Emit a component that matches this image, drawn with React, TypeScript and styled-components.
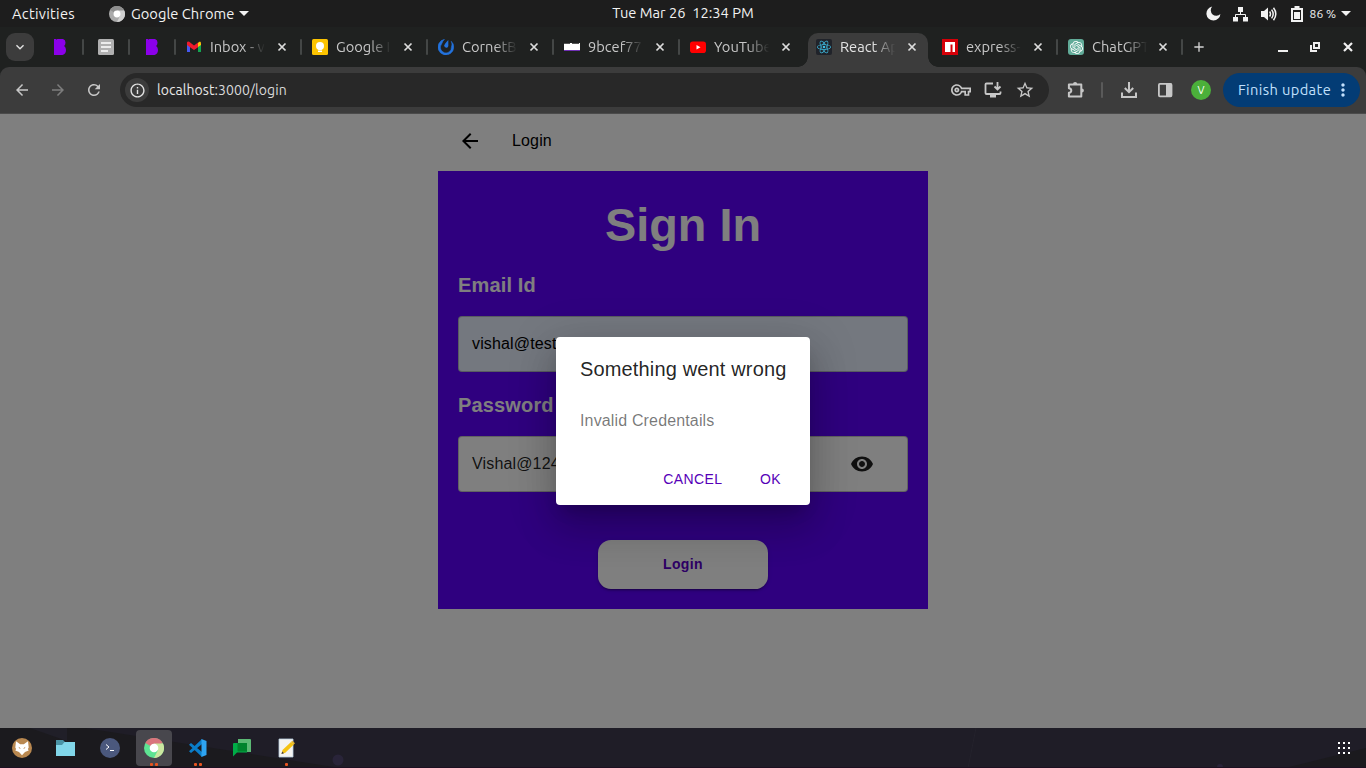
import React from 'react';
import styled, { createGlobalStyle, css } from 'styled-components';
import {
  MdArrowBack, MdArrowForward, MdRefresh, MdOutlineInfo, MdStarBorder, MdOutlineVpnKey,
  MdMoreVert, MdVisibility, MdAdd, MdKeyboardArrowDown,
} from 'react-icons/md';
import { SiOpenai, SiReact } from 'react-icons/si';

const GlobalStyle = createGlobalStyle`
  *, *::before, *::after { box-sizing: border-box; }
  html, body { margin: 0; padding: 0; background: #1d1d1d; }
  body { overflow: hidden; }
  button { font: inherit; border: 0; background: none; padding: 0; margin: 0; }
  svg { display: block; flex: none; }
`;

const shellFont = "'Ubuntu', 'Noto Sans', 'Open Sans', sans-serif";

const Desktop = styled.div`
  width: 1366px;
  height: 768px;
  display: flex;
  flex-direction: column;
  overflow: hidden;
  font-family: ${shellFont};
`;

/* ---------- GNOME top bar ---------- */
const TopBar = styled.header`
  height: 27px;
  flex: none;
  display: grid;
  grid-template-columns: 1fr auto 1fr;
  align-items: center;
  background: #1d1d1d;
  color: #f2f2f2;
  padding: 0 15px 0 12px;
`;
const BarLeft = styled.div`
  display: flex;
  align-items: center;
`;
const BarRight = styled.div`
  display: flex;
  align-items: center;
  justify-content: flex-end;
`;
const BarText = styled.span<{ $spacing?: number; $size?: number }>`
  font-size: ${(p) => p.$size ?? 14.67}px;
  line-height: 20px;
  letter-spacing: ${(p) => p.$spacing ?? 0}px;
  white-space: pre;
`;
const Clock = styled(BarText)`
  padding-left: 3px;
  padding-bottom: 1px;
`;
const AppMenu = styled.div`
  display: flex;
  align-items: center;
  margin-left: 34px;
  gap: 6px;
`;
const StatusIcons = styled.div`
  display: flex;
  align-items: center;
  gap: 12px;
  margin-right: 7px;
  & > :last-child { margin-left: 2px; }
`;
const Caret = styled.i<{ $offset?: number }>`
  border: 5px solid transparent;
  border-top-color: #f2f2f2;
  border-bottom: 0;
  margin-left: ${(p) => p.$offset ?? 0}px;
`;

/* ---------- Tab strip ---------- */
const TabStrip = styled.nav`
  height: 40px;
  flex: none;
  display: flex;
  align-items: center;
  background: #1f2120;
  color: #c7c7c7;
  padding-left: 6px;
`;
const TabSearch = styled.button`
  width: 28px;
  height: 28px;
  margin-right: 2px;
  border-radius: 9px;
  background: #3c3c3c;
  color: #e3e3e3;
  display: grid;
  place-items: center;
`;
const Separator = styled.i<{ $hidden?: boolean }>`
  width: 2px;
  height: 16px;
  flex: none;
  border-radius: 1px;
  background: ${(p) => (p.$hidden ? 'transparent' : '#444746')};
`;
const PinnedTab = styled.div`
  width: 46px;
  display: flex;
  align-items: center;
  gap: 14px;
`;
const Tab = styled.div<{ $active?: boolean; $width: number }>`
  position: relative;
  width: ${(p) => p.$width}px;
  height: 40px;
  flex: none;
  display: flex;
  align-items: center;
  isolation: isolate;
  padding-right: 12px;
  ${(p) =>
    p.$active &&
    css`
      color: #e3e3e3;
      &::before {
        content: '';
        position: absolute;
        z-index: -1;
        inset: 6px 2px 0 4px;
        border-radius: 10px 10px 0 0;
        background: #3c3c3c;
      }
      &::after {
        content: '';
        position: absolute;
        z-index: -1;
        inset: auto -8px 0 -6px;
        height: 10px;
        background:
          radial-gradient(circle at 0 0, transparent 9.5px, #3c3c3c 10px) left / 10px 10px no-repeat,
          radial-gradient(circle at 100% 0, transparent 9.5px, #3c3c3c 10px) right / 10px 10px no-repeat;
      }
    `}
`;
const Favicon = styled.span`
  width: 16px;
  height: 16px;
  flex: none;
  margin: 0 8px 0 10px;
  display: grid;
  place-items: center;
`;
const TabTitle = styled.span`
  width: 60px;
  white-space: pre;
  font-size: 14.67px;
  line-height: 22px;
  mask-image: linear-gradient(90deg, #000 55%, transparent 92%);
`;
const TabClose = styled.button`
  width: 12px;
  height: 12px;
  margin-left: auto;
`;
const NewTab = styled.button`
  width: 16px;
  height: 16px;
  margin-left: 8px;
  color: #d4d4d4;
`;
const WindowButtons = styled.div`
  display: flex;
  align-items: center;
  gap: 20px;
  margin-left: auto;
  padding-right: 12px;
`;

/* ---------- Toolbar ---------- */
const ToolbarBack = styled.div`
  flex: none;
  background: #1f2120;
`;
const Toolbar = styled.div`
  height: 47px;
  display: flex;
  align-items: center;
  background: #3c3c3c;
  border-bottom: 1px solid #4b4b4b;
  border-radius: 9px 9px 0 0;
  padding: 0 6px 0 13px;
  color: #c7c7c7;
`;
const NavButtons = styled.div`
  display: flex;
  gap: 18px;
  margin-right: 17px;
`;
const Omnibox = styled.div`
  width: 929px;
  height: 34px;
  flex: none;
  display: flex;
  align-items: center;
  padding: 0 14px 0 5px;
  border-radius: 17px;
  background: #282828;
`;
const SiteInfo = styled.span`
  width: 24px;
  height: 24px;
  display: grid;
  place-items: center;
  border-radius: 50%;
  background: #3c3c3c;
  color: #e3e3e3;
  margin-right: 8px;
`;
const Url = styled.span`
  flex: 1;
  font-size: 14px;
  line-height: 22px;
  letter-spacing: 0.06px;
  color: #dadada;
  b { font-weight: 400; color: #e8e8e8; }
`;
const OmniActions = styled.div`
  display: flex;
  align-items: center;
  gap: 13px;
`;
const ToolActions = styled.div`
  display: flex;
  align-items: center;
  margin-left: 17px;
`;
const ToolDivider = styled(Separator)`
  background: #5a5a5a;
  margin: 0 17px 0 15px;
`;
const DownloadGroup = styled.div`
  display: flex;
  align-items: center;
  gap: 19px;
`;
const Avatar = styled.span`
  width: 20px;
  height: 20px;
  flex: none;
  margin: 0 12px 0 18px;
  border-radius: 50%;
  background: #4bb03a;
  color: #fff;
  font-size: 11px;
  line-height: 20px;
  text-align: center;
`;
const UpdateButton = styled.button`
  width: 137px;
  height: 34px;
  flex: none;
  display: flex;
  align-items: center;
  justify-content: space-between;
  padding: 0 7px 0 15px;
  border-radius: 17px;
  background: #033c75;
  color: #c2e0fd;
  font-family: ${shellFont};
  font-size: 14.67px;
  letter-spacing: 0.38px;
  white-space: nowrap;
`;
const UpdateLabel = styled.span`
  padding-bottom: 2px;
`;

/* ---------- Web page ---------- */
const Page = styled.main`
  position: relative;
  flex: 1;
  background: #fff;
  font-family: 'Liberation Sans', Arial, sans-serif;
`;
const Column = styled.section`
  width: 490px;
  margin: 0 auto;
`;
const PageHeader = styled.div`
  height: 57px;
  display: flex;
  align-items: center;
  padding: 0 20px 3px;
  gap: 30px;
  font-size: 16px;
  letter-spacing: 0.00938em;
  color: #000;
`;
const Card = styled.div`
  height: 438px;
  display: flex;
  flex-direction: column;
  align-items: stretch;
  padding: 26px 20px 20px;
  background: #5e00ff;
`;
const Heading = styled.h1`
  margin: 0 0 16px;
  font-size: 46.8px;
  line-height: 56px;
  text-align: center;
  color: #fff;
`;
const Label = styled.label`
  font-size: 20px;
  font-weight: 700;
  line-height: 32px;
  letter-spacing: 0.0075em;
  color: #fff;
  margin-bottom: 15px;
`;
const Field = styled.div<{ $filled?: boolean }>`
  height: 56px;
  display: flex;
  align-items: center;
  justify-content: space-between;
  margin-bottom: 17px;
  padding: 0 33px 1px 13px;
  border: 1px solid rgba(0, 0, 0, 0.23);
  border-radius: 4px;
  background: ${(p) => (p.$filled ? '#e8f0fe' : '#fff')};
  font-size: 16px;
  letter-spacing: 0.00938em;
  color: ${(p) => (p.$filled ? '#000' : 'rgba(0, 0, 0, 0.87)')};
`;
const LoginButton = styled.button`
  align-self: center;
  width: 170px;
  height: 49px;
  margin-top: auto;
  padding-bottom: 2px;
  border-radius: 13px;
  background: #fff;
  color: #5b00c9;
  font-size: 14px;
  font-weight: 700;
  letter-spacing: 0.02857em;
  box-shadow: 0 3px 1px -2px rgba(0, 0, 0, 0.2), 0 2px 2px 0 rgba(0, 0, 0, 0.14), 0 1px 5px 0 rgba(0, 0, 0, 0.12);
`;
const Backdrop = styled.div`
  position: absolute;
  inset: 0;
  display: grid;
  place-items: center;
  background: rgba(0, 0, 0, 0.5);
`;
const Dialog = styled.div`
  width: 254px;
  border-radius: 4px;
  background: #fff;
  box-shadow: 0 11px 15px -7px rgba(0, 0, 0, 0.2), 0 24px 38px 3px rgba(0, 0, 0, 0.14), 0 9px 46px 8px rgba(0, 0, 0, 0.12);
`;
const DialogTitle = styled.h2`
  margin: 0;
  padding: 16px 24px;
  font-size: 20px;
  font-weight: 400;
  line-height: 32px;
  letter-spacing: 0.0075em;
  white-space: nowrap;
  color: rgba(0, 0, 0, 0.87);
`;
const DialogText = styled.p`
  margin: 0;
  padding: 8px 24px 20px;
  font-size: 16px;
  line-height: 24px;
  letter-spacing: 0.00938em;
  color: rgba(0, 0, 0, 0.54);
`;
const DialogActions = styled.div`
  display: flex;
  justify-content: flex-end;
  gap: 8px;
  padding: 8px;
`;
const DialogButton = styled.button`
  min-width: 64px;
  height: 36px;
  padding: 0 7.5px 0 8.5px;
  color: #5600b8;
  font-size: 14px;
  letter-spacing: 0.02857em;
`;

/* ---------- Taskbar ---------- */
const Taskbar = styled.footer`
  position: relative;
  isolation: isolate;
  height: 40px;
  flex: none;
  display: flex;
  align-items: center;
  justify-content: space-between;
  padding: 0 15px 0 4px;
  background: #1f1d27;
  overflow: hidden;
`;
const Wallpaper = styled.svg`
  position: absolute;
  inset: 0;
  z-index: -1;
`;
const Apps = styled.div`
  display: flex;
  gap: 8px;
`;
const AppItem = styled.div<{ $active?: boolean }>`
  position: relative;
  width: 36px;
  height: 36px;
  display: grid;
  place-items: center;
  border-radius: 4px;
  background: ${(p) => (p.$active ? '#48474d' : 'transparent')};
`;
const RunningDots = styled.span`
  position: absolute;
  left: 0;
  right: 0;
  bottom: 0;
  display: flex;
  justify-content: center;
  gap: 2px;
  i { width: 3px; height: 3px; border-radius: 1px; background: #e95420; }
`;

/* ---------- Drawings ---------- */
const ChromeMark = ({ size, colors }: { size: number; colors: string[] }) => (
  <svg width={size} height={size} viewBox="0 0 20 20">
    <circle cx="10" cy="10" r="10" fill={colors[2]} />
    <path d="M10 10 1.3 5A10 10 0 0 1 18.7 5Z" fill={colors[0]} />
    <path d="M10 5.5H19A10 10 0 0 1 10 20L14 12Z" fill={colors[1]} />
    <circle cx="10" cy="10" r="4.3" fill="#fff" />
  </svg>
);

const MoonIcon = () => (
  <svg width="15" height="15" viewBox="0 0 15 15">
    <path d="M6.2.6A7 7 0 1 0 14.4 8 5.2 5.2 0 0 1 6.2.6Z" fill="#f2f2f2" />
  </svg>
);
const NetworkIcon = () => (
  <svg width="16" height="16" viewBox="0 0 16 16" fill="#f2f2f2">
    <path d="M5 1h5v5H5zM0 11h5v4.500H0zM10 11h5v4.500h-5z" />
    <path d="M7.500 5v3.500M2.500 12V8.500h10V12" fill="none" stroke="#f2f2f2" />
  </svg>
);
const VolumeIcon = () => (
  <svg width="16" height="16" viewBox="0 0 16 16">
    <path d="M0 5h3l4-3.5v13L3 11H0z" fill="#f2f2f2" />
    <path d="M8.6 5.5q1.8 2.5 0 5M10.6 3.6q3.2 4.4 0 8.8M12.5 1.8q4.6 6.2 0 12.4" fill="none" stroke="#f2f2f2" strokeWidth="1.5" />
  </svg>
);
const BatteryIcon = () => (
  <svg width="12" height="16" viewBox="0 0 12 16">
    <path d="M1 3h10v12H1z" fill="none" stroke="#f2f2f2" strokeWidth="2" />
    <path d="M3.5 0h5v3h-5zM3 6h6v7H3z" fill="#f2f2f2" />
  </svg>
);

const BIcon = () => (
  <svg width="16" height="16" viewBox="0 0 16 16">
    <path d="M2 0h2l.6.7L5.300 0H11q2.500.8 2.500 3.600 0 2.200-1.300 3.400Q14 8.500 14 11q0 3.800-3.500 5H2z" fill="#8b00ea" />
  </svg>
);
const DocIcon = () => (
  <svg width="16" height="16" viewBox="0 0 16 16">
    <rect width="16" height="16" rx="1.5" fill="#b0b0b0" />
    <path d="M3 4h10M3 8h10M3 12h7" stroke="#fff" strokeWidth="1.7" />
  </svg>
);
const GmailIcon = () => (
  <svg width="16" height="16" viewBox="0 0 16 16">
    <path d="M1 5v8h3V7z" fill="#4659f0" />
    <path d="M12 7v6h3V5z" fill="#13a551" />
    <path d="M12 3.800 14 2.500q1 .5 1 2V6l-3 2z" fill="#ffc107" />
    <path d="M1 3.500Q1.500 2 3.200 2.800L8 6.500l4-3v4.700L8 11 4 8.200 1 6z" fill="#f01a2c" />
  </svg>
);
const KeepIcon = () => (
  <svg width="16" height="16" viewBox="0 0 16 16">
    <rect width="16" height="16" rx="1.5" fill="#fdc400" />
    <circle cx="8" cy="7" r="4" fill="#fff" />
    <path d="M6 8h4v2.500H6zM6 11.500h4V13H6z" fill="#fff" />
  </svg>
);
const CornetIcon = () => (
  <svg width="16" height="16" viewBox="0 0 16 16">
    <path d="M6.500 .300A7.900 7.900 0 1 0 13.200 2.200 7 7 0 0 1 13.400 8 5.500 5.500 0 1 1 3.600 5Q4.600 2 6.500 .300Z" fill="#2372dc" stroke="#2372dc" strokeWidth=".5" />
    <path d="M10.300 1v6q-.3 2-2 1.800Q6 8.300 6.300 6.200 6.700 5 10.300 1Z" fill="#2372dc" />
  </svg>
);
const StripIcon = () => (
  <svg width="16" height="16" viewBox="0 0 16 16">
    <path d="M0 4h16v8H0z" fill="#fff" />
    <path d="M0 4.500h6M8 4.500h7" stroke="#555" />
    <path d="M0 11.500h16" stroke="#6f30b5" />
  </svg>
);
const YoutubeIcon = () => (
  <svg width="16" height="16" viewBox="0 0 16 16">
    <rect y="2.5" width="16" height="11.5" rx="2.8" fill="#f00" />
    <path d="M6.500 6 10.500 8.200 6.500 10.400z" fill="#fff" />
  </svg>
);
const ReactTile = styled.span`
  width: 16px;
  height: 16px;
  display: grid;
  place-items: center;
  border-radius: 2px;
  background: #20232a;
  color: #3fc1e6;
`;
const OpenAiTile = styled(ReactTile)`
  border-radius: 3px;
  background: #61ab98;
  color: #fff;
`;
const NpmIcon = () => (
  <svg width="16" height="16" viewBox="0 0 16 16">
    <path d="M0 0h16v16H0z" fill="#d50008" />
    <path d="M3 3h10v10h-2.500V5.500h-2V13H3z" fill="#fff" />
  </svg>
);
const TabCloseIcon = () => (
  <svg width="12" height="12" viewBox="0 0 12 12">
    <path d="m2.500 2.500 7 7M9.500 2.500l-7 7" stroke="#dcdcdc" strokeWidth="1.7" />
  </svg>
);

const InstallIcon = () => (
  <svg width="18" height="18" viewBox="0 0 18 18" fill="none" stroke="#c7c7c7" strokeWidth="1.8">
    <path d="M9 2.500H2.500q-1 0-1 1v8.500q0 1 1 1h13q1 0 1-1v-1.500" />
    <path d="M6 15h6" strokeWidth="3" />
    <path d="M13.500 1v7M10.500 5.500l3 3 3-3" />
  </svg>
);
const ExtensionIcon = () => (
  <svg width="20" height="20" viewBox="0 0 20 20">
    <path
      d="M2.900 4.400h12.400v12.200H2.900v-3.800q2.400-.3 2.400-2.300T2.900 8.200z"
      fill="none" stroke="#c7c7c7" strokeWidth="2" strokeLinejoin="round"
    />
    <path d="M7 4a2.100 2.100 0 0 1 4.200 0zM15.800 8.400a2.100 2.100 0 0 1 0 4.200z" fill="#c7c7c7" />
  </svg>
);
const DownloadIcon = () => (
  <svg width="18" height="18" viewBox="0 0 18 18" fill="none" stroke="#c7c7c7" strokeWidth="2">
    <path d="M9 1v10M4.800 7 9 11.200 13.200 7M2 11.500V16h14v-4.500" />
  </svg>
);
const SidePanelIcon = () => (
  <svg width="16" height="16" viewBox="0 0 16 16">
    <rect x="1.9" y="1.9" width="12.6" height="12.4" rx="1" fill="none" stroke="#c7c7c7" strokeWidth="1.8" />
    <path d="M9 1.500h5.500v13H9z" fill="#c7c7c7" />
  </svg>
);
const MinimizeIcon = () => (
  <svg width="12" height="12" viewBox="0 0 12 12"><path d="M0 10h10" stroke="#f0f0f0" strokeWidth="2" /></svg>
);
const RestoreIcon = () => (
  <svg width="12" height="12" viewBox="0 0 12 12" fill="none" stroke="#f0f0f0">
    <path d="M4 2h5v5H4z" strokeWidth="2" />
    <path d="M1 4v6h6" strokeWidth="2" />
  </svg>
);
const CloseIcon = () => (
  <svg width="12" height="12" viewBox="0 0 12 12"><path d="m2 2 8 8M10 2l-8 8" stroke="#f0f0f0" strokeWidth="2.2" /></svg>
);

const FoxIcon = () => (
  <svg width="20" height="20" viewBox="0 0 20 20">
    <circle cx="10" cy="10" r="10" fill="#b98850" />
    <path d="M4 3.200 8.200 6.300h3.600L16 3.200l.7 6.300-.8 1.500.8 1.500-3.700 1.500-3 3.300-3-3.300-3.700-1.500.8-1.500-.8-1.500z" fill="#fff" />
    <path d="m6.800 9.500 1.500.9M13.200 9.500l-1.500.9" stroke="#b98850" />
  </svg>
);
const FolderIcon = () => (
  <svg width="20" height="20" viewBox="0 0 20 20">
    <path d="M0 2h7l2 2v4H0z" fill="#4a93a5" />
    <path d="M0 7h6l2.500-3H19v14H0z" fill="#81d6e9" />
  </svg>
);
const TerminalIcon = () => (
  <svg width="20" height="20" viewBox="0 0 20 20">
    <circle cx="10" cy="10" r="10" fill="#4b587d" />
    <path d="m6 6.500 3 2.500-3 2.500M10 12.500h4" fill="none" stroke="#fff" />
  </svg>
);
const CodeIcon = () => (
  <svg width="20" height="20" viewBox="0 0 20 20">
    <path d="M14 1v5L3 15 1 13.300zM1 6.700 3 5l11 9v5z" fill="#0a7dc9" />
    <path d="m13.500 1 5 2v14l-5 2z" fill="#2ea4f2" />
  </svg>
);
const ChatIcon = () => (
  <svg width="20" height="20" viewBox="0 0 20 20">
    <path d="M6 1h12q1 0 1 1v12h-3H6z" fill="#5bb974" />
    <path d="M2 5h13v9.500H5L1 18.500V6q0-1 1-1z" fill="#00ac47" />
    <path d="M5.500 5H15v8.500H6.500q-1 0-1-1z" fill="#00832d" />
  </svg>
);
const NotesIcon = () => (
  <svg width="20" height="20" viewBox="0 0 20 20">
    <path d="M3 1h14v18H3z" fill="#f4f3f1" stroke="#b9cde0" strokeWidth=".8" />
    <path d="m5.500 16 1-4L15 4l2.800 2.500-8.500 8.200z" fill="#f5c211" />
    <path d="m5.500 16 .7-2.500 1.800 1.700z" fill="#3d3846" />
    <path d="m15 4 1.300-1.300 2.700 2.500-1.300 1.400z" fill="#e5b52c" />
  </svg>
);
const GridIcon = () => (
  <svg width="14" height="14" viewBox="0 0 14 14" fill="#fff">
    {[1, 6, 11].map((y) => [1, 6, 11].map((x) => <rect key={`${x}${y}`} x={x} y={y} width="2" height="2" />))}
  </svg>
);

const tabs = [
  { title: 'Inbox - v', icon: <GmailIcon /> },
  { title: 'Google I', icon: <KeepIcon /> },
  { title: 'CornetB', icon: <CornetIcon /> },
  { title: '9bcef77', icon: <StripIcon /> },
  { title: 'YouTube', icon: <YoutubeIcon /> },
  { title: 'React Ap', icon: <ReactTile><SiReact size={14} /></ReactTile>, active: true },
  { title: 'express-', icon: <NpmIcon /> },
  { title: 'ChatGPT', icon: <OpenAiTile><SiOpenai size={13} /></OpenAiTile>, width: 125 },
];

const dockApps = [
  { icon: <FoxIcon />, windows: 0 },
  { icon: <FolderIcon />, windows: 0 },
  { icon: <TerminalIcon />, windows: 0 },
  { icon: <ChromeMark size={20} colors={['#d9747c', '#cbe8a0', '#5ee493']} />, windows: 2, active: true },
  { icon: <CodeIcon />, windows: 2 },
  { icon: <ChatIcon />, windows: 0 },
  { icon: <NotesIcon />, windows: 1 },
];

export default function App() {
  return (
    <Desktop>
      <GlobalStyle />
      <TopBar>
        <BarLeft>
          <BarText $spacing={0.28}>Activities</BarText>
          <AppMenu>
            <ChromeMark size={16} colors={['#8f8f8f', '#d0d0d0', '#aaaaaa']} />
            <BarText $spacing={0.05}>Google Chrome</BarText>
            <Caret $offset={-1} />
          </AppMenu>
        </BarLeft>
        <Clock>Tue Mar 26  12:34 PM</Clock>
        <BarRight>
          <StatusIcons>
            <MoonIcon />
            <NetworkIcon />
            <VolumeIcon />
            <BatteryIcon />
          </StatusIcons>
          <BarText $size={12}>86 %</BarText>
          <Caret $offset={5} />
        </BarRight>
      </TopBar>

      <TabStrip>
        <TabSearch><MdKeyboardArrowDown size={16} /></TabSearch>
        <PinnedTab><Separator $hidden /><BIcon /></PinnedTab>
        <PinnedTab><Separator /><DocIcon /></PinnedTab>
        <PinnedTab><Separator /><BIcon /></PinnedTab>
        {tabs.map((tab, i) => (
          <Tab key={tab.title} $active={tab.active} $width={tab.width ?? 126}>
            <Separator $hidden={i === 5 || i === 6} />
            <Favicon>{tab.icon}</Favicon>
            <TabTitle>{tab.title}</TabTitle>
            <TabClose><TabCloseIcon /></TabClose>
          </Tab>
        ))}
        <Separator />
        <NewTab><MdAdd size={16} /></NewTab>
        <WindowButtons>
          <MinimizeIcon />
          <RestoreIcon />
          <CloseIcon />
        </WindowButtons>
      </TabStrip>

      <ToolbarBack>
        <Toolbar>
          <NavButtons>
            <MdArrowBack size={18} />
            <MdArrowForward size={18} color="#7d7d7d" />
            <MdRefresh size={18} />
          </NavButtons>
          <Omnibox>
            <SiteInfo><MdOutlineInfo size={17} /></SiteInfo>
            <Url><b>localhost</b>:3000/login</Url>
            <OmniActions>
              <MdOutlineVpnKey size={20} />
              <InstallIcon />
              <MdStarBorder size={20} />
            </OmniActions>
          </Omnibox>
          <ToolActions>
            <ExtensionIcon />
            <ToolDivider />
            <DownloadGroup>
              <DownloadIcon />
              <SidePanelIcon />
            </DownloadGroup>
            <Avatar>V</Avatar>
          </ToolActions>
          <UpdateButton><UpdateLabel>Finish update</UpdateLabel><MdMoreVert size={20} /></UpdateButton>
        </Toolbar>
      </ToolbarBack>

      <Page>
        <Column>
          <PageHeader><MdArrowBack size={24} />Login</PageHeader>
          <Card>
            <Heading>Sign In</Heading>
            <Label>Email Id</Label>
            <Field $filled>vishal@test.com</Field>
            <Label>Password</Label>
            <Field>Vishal@124<MdVisibility size={24} /></Field>
            <LoginButton>Login</LoginButton>
          </Card>
        </Column>
        <Backdrop>
          <Dialog role="dialog">
            <DialogTitle>Something went wrong</DialogTitle>
            <DialogText>Invalid Credentails</DialogText>
            <DialogActions>
              <DialogButton>CANCEL</DialogButton>
              <DialogButton>OK</DialogButton>
            </DialogActions>
          </Dialog>
        </Backdrop>
      </Page>

      <Taskbar>
        <Wallpaper width="1366" height="40" viewBox="0 0 1366 40">
          <path d="M0 0H85L340 40H0z" fill="#1b1a1e" />
          <path d="M30 0h37v13z" fill="#201f28" />
          <path d="M1285 40 1366 20V40z" fill="#1b1a1e" />
          <path d="M976 0 968 40" stroke="#24222c" />
          <circle cx="338" cy="32" r="5.5" fill="#292439" />
          <circle cx="1220" cy="39" r="3" fill="#292439" />
          <path d="M0 39.500H1366" stroke="#1d1022" />
        </Wallpaper>
        <Apps>
          {dockApps.map((app, i) => (
            <AppItem key={i} $active={app.active}>
              {app.icon}
              <RunningDots>{Array.from({ length: app.windows }, (_, n) => <i key={n} />)}</RunningDots>
            </AppItem>
          ))}
        </Apps>
        <GridIcon />
      </Taskbar>
    </Desktop>
  );
}
